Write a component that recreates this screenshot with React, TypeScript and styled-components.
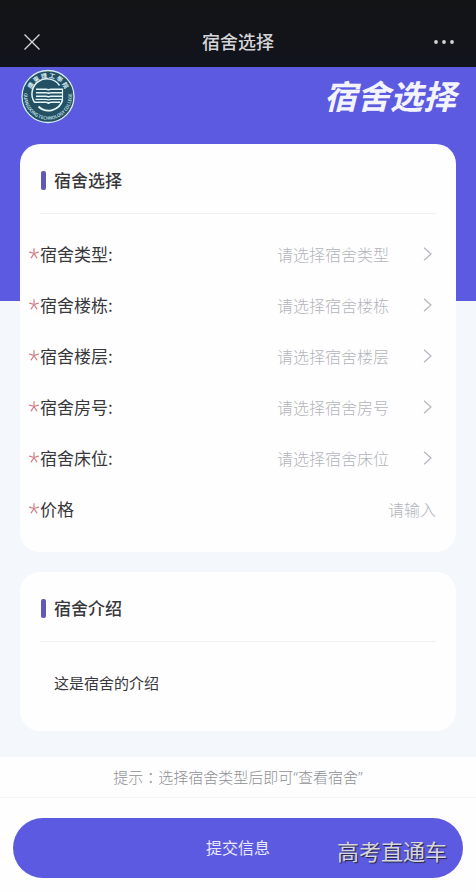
import React from "react";
import styled, { createGlobalStyle } from "styled-components";

const PURPLE = "#5c5ae0";

const GlobalStyle = createGlobalStyle`
  *, *::before, *::after { box-sizing: border-box; }
  body {
    margin: 0;
    background: #fefefe;
    color: #38383c;
    font-family: "Noto Sans CJK SC", sans-serif;
    font-size: 16px;
    line-height: 24px;
  }
  button, input, select { font: inherit; color: inherit; margin: 0; padding: 0; border: 0; background: none; }
  h1, h2, p { margin: 0; }
`;

const Page = styled.div`
  min-height: 100vh;
  display: flex;
  flex-direction: column;
`;

const NavBar = styled.header`
  display: grid;
  grid-template-columns: 48px 1fr 48px;
  align-items: center;
  height: 67px;
  padding: 16px 8px 0;
  background: linear-gradient(#131415, #12141d);
  color: #d4d4d8;
`;

const NavTitle = styled.h1`
  padding-bottom: 2px;
  font-size: 18px;
  font-weight: 500;
  text-align: center;
`;

const NavButton = styled.button`
  display: flex;
  justify-content: center;
  align-items: center;
  height: 40px;
`;

const Main = styled.main`
  display: flex;
  flex-direction: column;
  gap: 20px;
  padding: 0 20px 26px;
  background: linear-gradient(${PURPLE} 234px, #f4f8fc 234px);
`;

const Banner = styled.div`
  display: flex;
  justify-content: space-between;
  align-items: center;
  height: 57px;
`;

const BannerTitle = styled.p`
  padding-bottom: 2px;
  font-size: 33px;
  line-height: 40px;
  font-weight: 700;
  font-style: italic;
  color: #f3f4ff;
`;

const Card = styled.section`
  padding: 0 20px;
  border-radius: 20px;
  background: #fefefe;
`;

const CardHeader = styled.div`
  display: flex;
  align-items: center;
  gap: 8px;
  height: 70px;
  padding: 4px 0 0 1px;
  border-bottom: 1px solid #eef0f3;
`;

const Accent = styled.span`
  width: 5px;
  height: 19px;
  border-radius: 2px;
  background: #6059b8;
`;

const CardTitle = styled.h2`
  padding-bottom: 2px;
  font-size: 17px;
  font-weight: 500;
`;

const FieldList = styled.div`
  margin-left: -11px;
  padding: 14px 0 18px;
`;

const Field = styled.div`
  display: flex;
  align-items: center;
  height: 51px;
`;

const FieldLabel = styled.label`
  display: flex;
  flex: none;
  align-items: center;
  font-size: 17px;
`;

const Required = styled.span`
  display: flex;
  width: 11px;
  color: #cf7d88;
`;

const Picker = styled.select`
  flex: 1;
  min-width: 0;
  height: 40px;
  appearance: none;
  text-align-last: right;
  font-weight: 300;
  color: #b3b5bc;
`;

const Chevron = styled.svg`
  flex: none;
  margin: 0 4px 0 34px;
`;

const PriceInput = styled.input`
  flex: 1;
  min-width: 0;
  height: 40px;
  text-align: right;
  &::placeholder { color: #b3b5bc; font-weight: 300; opacity: 1; }
`;

const Intro = styled.p`
  padding: 29px 14px 36px;
  font-size: 15px;
`;

const Footer = styled.footer`
  flex: 1;
  background: #fefefe;
`;

const Tip = styled.p`
  padding: 8px 0;
  border-bottom: 1px solid #f3f4f6;
  font-family: "Noto Sans", "Noto Sans CJK SC", sans-serif;
  font-size: 15px;
  font-weight: 300;
  text-align: center;
  color: #8f9195;
`;

const CenteredColon = styled.span`
  font-family: "Noto Sans CJK TC", sans-serif;
`;

const SubmitArea = styled.div`
  position: relative;
  padding: 20px 13px 14px;
`;

const SubmitButton = styled.button`
  width: 100%;
  height: 60px;
  padding-bottom: 2px;
  border-radius: 30px;
  background: ${PURPLE};
  color: #e9eaff;
`;

const Watermark = styled.span`
  position: absolute;
  right: 29px;
  top: 36px;
  font-size: 22px;
  line-height: 32px;
  color: #d6d6de;
  text-shadow: 1px 1px 1px #24243c;
  pointer-events: none;
`;

function CollegeLogo() {
  return (
    <svg width="56" height="56" viewBox="0 0 56 56" role="img" aria-label="廣東理工學院">
      <defs>
        <path id="arc-top" d="M9.800 28 A18.200 18.200 0 0 1 46.200 28" />
        <path id="arc-bottom" d="M4.700 22 A24 24 0 1 0 51.300 22" />
      </defs>
      <circle cx="28" cy="28.500" r="26" fill="#245064" stroke="#d5edf4" strokeWidth="1.300" />
      <g fill="#d5edf4" fontFamily="Noto Sans CJK SC, sans-serif">
        <text fontSize="6" fontWeight="700" textAnchor="middle">
          <textPath href="#arc-top" startOffset="50%">廣 東 理 工 學 院</textPath>
        </text>
        <text fontSize="4.500" fontWeight="500" textAnchor="middle">
          <textPath href="#arc-bottom" startOffset="50%">GUANGDONG TECHNOLOGY COLLEGE</textPath>
        </text>
      </g>
      <g fill="none" stroke="#e4f5f8">
        <path d="M39.500 17.500 A15 15 0 0 0 14.500 34.300 H25.500 Q28.500 34.300 28.500 36 Q28.500 34.300 31.500 34.300 H40" strokeWidth="1.500" />
        <path d="M42.500 32 A14.500 14.500 0 0 1 18.500 38.500" strokeWidth="1.800" />
        <path d="M16 21.200 H26 Q28.500 21.200 28.500 22.500 Q28.500 21.200 31 21.200 H42" strokeWidth="1.400" />
        <path d="M16 24.800 H26 Q28.500 24.800 28.500 26 Q28.500 24.800 31 24.800 H42" strokeWidth="1.400" />
        <path d="M16 28.200 H26 Q28.500 28.200 28.500 29.500 Q28.500 28.200 31 28.200 H42" strokeWidth="1.400" />
        <path d="M15.500 31.300 H26 Q28.500 31.300 28.500 32.500 Q28.500 31.300 31 31.300 H42.500 V20.500" strokeWidth="1.200" />
      </g>
    </svg>
  );
}

function Asterisk() {
  return (
    <svg width="10" height="11" viewBox="0 0 10 11" fill="none" stroke="currentColor" strokeWidth="1.200" strokeLinecap="round" aria-hidden="true">
      <path d="M5 5.500 V.7 M5 5.500 L.6 4.200 M5 5.500 L9.400 4.200 M5 5.500 L2.200 9.800 M5 5.500 L7.800 9.800" />
    </svg>
  );
}

const pickers = [
  { id: "type", name: "宿舍类型" },
  { id: "building", name: "宿舍楼栋" },
  { id: "floor", name: "宿舍楼层" },
  { id: "room", name: "宿舍房号" },
  { id: "bed", name: "宿舍床位" },
];

export default function App() {
  return (
    <Page>
      <GlobalStyle />
      <NavBar>
        <NavButton type="button" aria-label="关闭">
          <svg width="16" height="16" viewBox="0 0 16 16" stroke="currentColor" strokeWidth="1.400">
            <path d="M.5 .5 L15.500 15.500 M15.500 .5 L.5 15.500" />
          </svg>
        </NavButton>
        <NavTitle>宿舍选择</NavTitle>
        <NavButton type="button" aria-label="更多">
          <svg width="20" height="4" viewBox="0 0 20 4" fill="currentColor">
            <circle cx="2" cy="2" r="1.900" />
            <circle cx="10" cy="2" r="1.900" />
            <circle cx="18" cy="2" r="1.900" />
          </svg>
        </NavButton>
      </NavBar>
      <Main>
        <Banner>
          <CollegeLogo />
          <BannerTitle>宿舍选择</BannerTitle>
        </Banner>
        <Card>
          <CardHeader>
            <Accent />
            <CardTitle>宿舍选择</CardTitle>
          </CardHeader>
          <FieldList>
            {pickers.map(({ id, name }) => (
              <Field key={id}>
                <FieldLabel htmlFor={id}>
                  <Required><Asterisk /></Required>
                  {name}:
                </FieldLabel>
                <Picker id={id} defaultValue="">
                  <option value="">请选择{name}</option>
                </Picker>
                <Chevron width="9" height="14" viewBox="0 0 9 14" fill="none" stroke="#b4b6bd" strokeWidth="1.200" aria-hidden="true">
                  <path d="M1 .7 L8 7 L1 13.300" />
                </Chevron>
              </Field>
            ))}
            <Field>
              <FieldLabel htmlFor="price">
                <Required><Asterisk /></Required>
                价格
              </FieldLabel>
              <PriceInput id="price" placeholder="请输入" />
            </Field>
          </FieldList>
        </Card>
        <Card>
          <CardHeader>
            <Accent />
            <CardTitle>宿舍介绍</CardTitle>
          </CardHeader>
          <Intro>这是宿舍的介绍</Intro>
        </Card>
      </Main>
      <Footer>
        <Tip>提示<CenteredColon>：</CenteredColon>选择宿舍类型后即可“查看宿舍”</Tip>
        <SubmitArea>
          <SubmitButton type="button">提交信息</SubmitButton>
          <Watermark>高考直通车</Watermark>
        </SubmitArea>
      </Footer>
    </Page>
  );
}
